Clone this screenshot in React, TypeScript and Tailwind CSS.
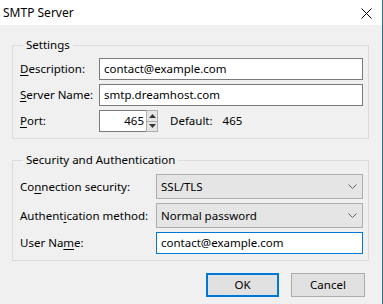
const font = { fontFamily: '"Noto Sans", "Open Sans", sans-serif' };

const Key = ({ children }: { children: string }) => <span className="underline underline-offset-2">{children}</span>;

const TextBox = ({ value, focused }: { value: string; focused?: boolean }) => (
  <div
    className={`flex-1 h-[22px] flex items-center px-[4px] bg-white border ${
      focused ? "border-[#0078d7]" : "border-[#7a7a7a]"
    }`}
  >
    {value}
  </div>
);

const Combo = ({ value }: { value: string }) => (
  <div className="flex-1 h-[25px] flex items-center justify-between pl-[4px] pr-[5px] bg-[#e5e5e5] border border-[#adadad]">
    <span>{value}</span>
    <svg width="9" height="5" viewBox="0 0 9 5">
      <path d="M0.5 0.5 L4.5 4.5 L8.5 0.5" fill="none" stroke="#606060" strokeWidth="1" />
    </svg>
  </div>
);

export default function App() {
  return (
    <div style={font} className="w-[383px] h-[304px] bg-[#f0f0f0] text-[11.5px] text-black leading-[16px] border-r border-[#2d6f80] flex flex-col">
      <div className="h-[25px] bg-white flex items-center justify-between pl-[3px] pr-[10px] text-[12px]">
        <span>SMTP Server</span>
        <svg width="11" height="11" viewBox="0 0 11 11" className="mt-[1px]">
          <path d="M0.5 0.5 L10.5 10.5 M10.5 0.5 L0.5 10.5" stroke="#000" strokeWidth="1" />
        </svg>
      </div>

      <div className="pl-[12px] pr-[13px] pt-[12px]">
        <fieldset className="border border-[#dcdcdc] pl-[7px] pr-[5px] pt-[5px] pb-[6px] flex flex-col gap-[4px]">
          <legend className="ml-[3px] px-[3px]">Settings</legend>
          <div className="flex items-center">
            <span className="w-[79px]"><Key>D</Key>escription:</span>
            <TextBox value="contact@example.com" />
          </div>
          <div className="flex items-center">
            <span className="w-[79px]"><Key>S</Key>erver Name:</span>
            <TextBox value="smtp.dreamhost.com" />
          </div>
          <div className="flex items-center">
            <span className="w-[79px]"><Key>P</Key>ort:</span>
            <div className="w-[47px] h-[22px] flex items-center justify-end pr-[2px] bg-white border border-[#7a7a7a] border-r-0">465</div>
            <div className="w-[12px] h-[22px] flex flex-col">
              <div className="flex-1 flex items-center justify-center bg-[#e5e5e5] border border-[#adadad]">
                <svg width="7" height="4" viewBox="0 0 7 4"><path d="M0 4 L3.5 0 L7 4 Z" fill="#333" /></svg>
              </div>
              <div className="flex-1 flex items-center justify-center bg-[#e5e5e5] border border-t-0 border-[#adadad]">
                <svg width="7" height="4" viewBox="0 0 7 4"><path d="M0 0 L3.5 4 L7 0 Z" fill="#333" /></svg>
              </div>
            </div>
            <span className="ml-[12px]">Default:</span>
            <span className="ml-[10px]">465</span>
          </div>
        </fieldset>

        <fieldset className="mt-[13px] border border-[#dcdcdc] pl-[7px] pr-[5px] pt-[6px] pb-[6px] flex flex-col gap-[4px]">
          <legend className="ml-[3px] px-[3px]">Security and Authentication</legend>
          <div className="flex items-center">
            <span className="w-[136px]">Co<Key>n</Key>nection security:</span>
            <Combo value="SSL/TLS" />
          </div>
          <div className="flex items-center">
            <span className="w-[136px]">Authent<Key>i</Key>cation method:</span>
            <Combo value="Normal password" />
          </div>
          <div className="flex items-center">
            <span className="w-[136px]">User Na<Key>m</Key>e:</span>
            <TextBox value="contact@example.com" focused />
          </div>
        </fieldset>
      </div>

      <div className="flex justify-end gap-[12px] pr-[17px] mt-[12px]">
        <button className="w-[73px] h-[24px] bg-[#e1e1e1] border-2 border-[#0078d7]">OK</button>
        <button className="w-[74px] h-[24px] bg-[#e1e1e1] border border-[#adadad]">Cancel</button>
      </div>
    </div>
  );
}
